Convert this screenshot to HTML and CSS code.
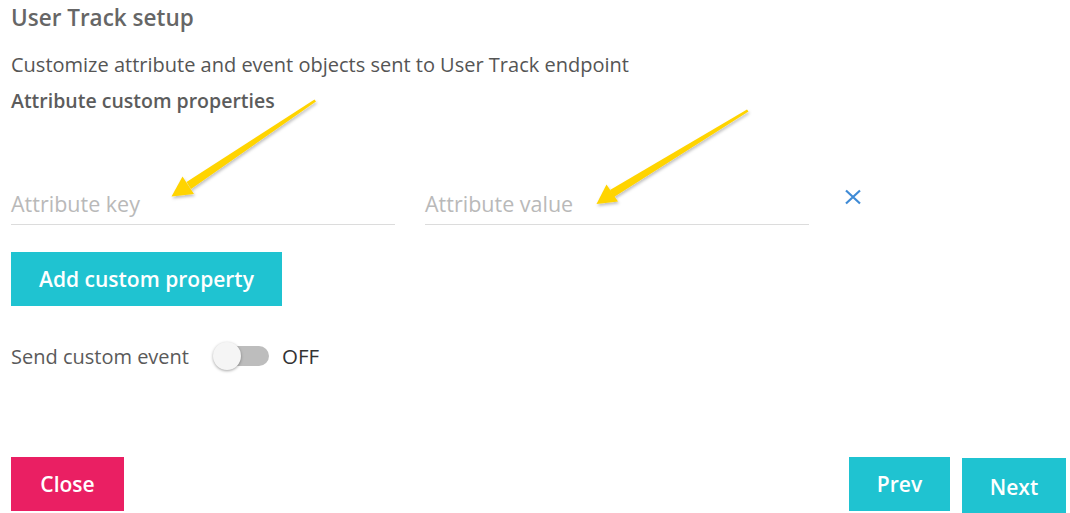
FILE: index.html
```html
<!DOCTYPE html>
<html lang="en">
<head>
<meta charset="utf-8">
<title>User Track setup</title>
<link rel="stylesheet" href="styles.css">
</head>
<body>
<div class="page">
  <h1 class="title">User Track setup</h1>
  <p class="desc">Customize attribute and event objects sent to User Track endpoint</p>
  <h2 class="subtitle">Attribute custom properties</h2>

  <div class="prop-row">
    <div class="field"><span class="placeholder">Attribute key</span></div>
    <div class="field"><span class="placeholder">Attribute value</span></div>
    <svg class="remove" width="18" height="16" viewBox="0 0 18 16"><path d="M2 1.5 L16 14.5 M16 1.5 L2 14.5" stroke="#3f8bd6" stroke-width="2.2" fill="none"/></svg>
  </div>

  <button class="btn btn-teal btn-add">Add custom property</button>

  <div class="toggle-row">
    <span class="toggle-label">Send custom event</span>
    <span class="toggle"><span class="track"></span><span class="knob"></span></span>
    <span class="toggle-state">OFF</span>
  </div>

  <div class="footer">
    <button class="btn btn-pink btn-close">Close</button>
    <div class="nav">
      <button class="btn btn-teal btn-prev">Prev</button>
      <button class="btn btn-teal btn-next">Next</button>
    </div>
  </div>

  <svg class="annot" width="1070" height="513" viewBox="0 0 1070 513">
    <defs>
      <filter id="sh" x="-20%" y="-20%" width="140%" height="140%">
        <feDropShadow dx="1" dy="2" stdDeviation="1.5" flood-color="#000" flood-opacity="0.25"/>
      </filter>
    </defs>
    <g filter="url(#sh)" fill="#ffd400">
      <polygon points="314.5,99.5 316,101.5 191,189 186.5,182"/>
      <polygon points="171.5,196.5 182.5,176.5 194,194"/>
      <polygon points="747,109.5 748.5,111.5 614,197 610,190"/>
      <polygon points="596.5,204 606.5,184.5 618,201.5"/>
    </g>
  </svg>
</div>
</body>
</html>
```
FILE: styles.css
```css
html, body {
  margin: 0;
  padding: 0;
  background: #fff;
}
.page {
  position: relative;
  width: 1070px;
  height: 513px;
  box-sizing: border-box;
  padding: 0 4px 0 11px;
  display: flex;
  flex-direction: column;
  font-family: "Open Sans", "Liberation Sans", sans-serif;
  color: #5a5a5a;
  overflow: hidden;
}
.title {
  margin: 4px 0 0;
  font-size: 22.5px;
  font-weight: 600;
  line-height: 28px;
  letter-spacing: 0;
  color: #666;
}
.desc {
  margin: 20px 0 0;
  font-size: 20px;
  line-height: 26px;
  letter-spacing: 0;
  color: #555;
}
.subtitle {
  margin: 10px 0 0;
  font-size: 19.5px;
  font-weight: 600;
  line-height: 26px;
  letter-spacing: 0;
  color: #5c5c5c;
}
.prop-row {
  display: flex;
  align-items: flex-start;
  gap: 30px;
  margin-top: 72px;
}
.field {
  width: 384px;
  height: 39px;
  border-bottom: 1px solid #dcdcdc;
  display: flex;
  align-items: flex-end;
  padding-bottom: 7px;
  box-sizing: border-box;
}
.placeholder {
  font-size: 21.5px;
  line-height: 26px;
  color: #b9b9b9;
  letter-spacing: 0;
}
.remove {
  margin: 3px 0 0 5px;
}
.btn {
  border: 0;
  margin: 0;
  padding: 0;
  font-family: "Open Sans", "Liberation Sans", sans-serif;
  font-size: 21px;
  font-weight: 600;
  color: #fff;
  letter-spacing: 0;
  cursor: pointer;
}
.btn-teal { background: #1fc3d1; }
.btn-pink { background: #ea1f63; }
.btn-add {
  align-self: flex-start;
  margin-top: 27px;
  width: 271px;
  height: 54px;
}
.toggle-row {
  display: flex;
  align-items: center;
  margin-top: 34px;
  height: 32px;
}
.toggle-label {
  font-size: 20px;
  color: #5a5a5a;
  width: 201px;
}
.toggle {
  position: relative;
  width: 57px;
  height: 32px;
  display: inline-block;
}
.track {
  position: absolute;
  left: 6px;
  top: 6px;
  width: 51px;
  height: 20px;
  border-radius: 10px;
  background: #bdbdbd;
}
.knob {
  position: absolute;
  left: 1px;
  top: 2px;
  width: 28px;
  height: 28px;
  border-radius: 50%;
  background: #f5f5f5;
  box-shadow: 0 1px 3px rgba(0,0,0,0.35);
}
.toggle-state {
  margin-left: 13px;
  font-size: 20.5px;
  color: #333;
}
.footer {
  margin-top: auto;
  display: flex;
  justify-content: space-between;
  align-items: flex-start;
  height: 56px;
}
.btn-close {
  width: 113px;
  height: 54px;
}
.nav {
  display: flex;
  gap: 12px;
  align-items: flex-start;
}
.btn-prev {
  width: 101px;
  height: 54px;
}
.btn-next {
  width: 104px;
  height: 58px;
  margin-top: 1px;
  padding-top: 0;
}
.annot {
  position: absolute;
  left: 0;
  top: 0;
  pointer-events: none;
}
```
